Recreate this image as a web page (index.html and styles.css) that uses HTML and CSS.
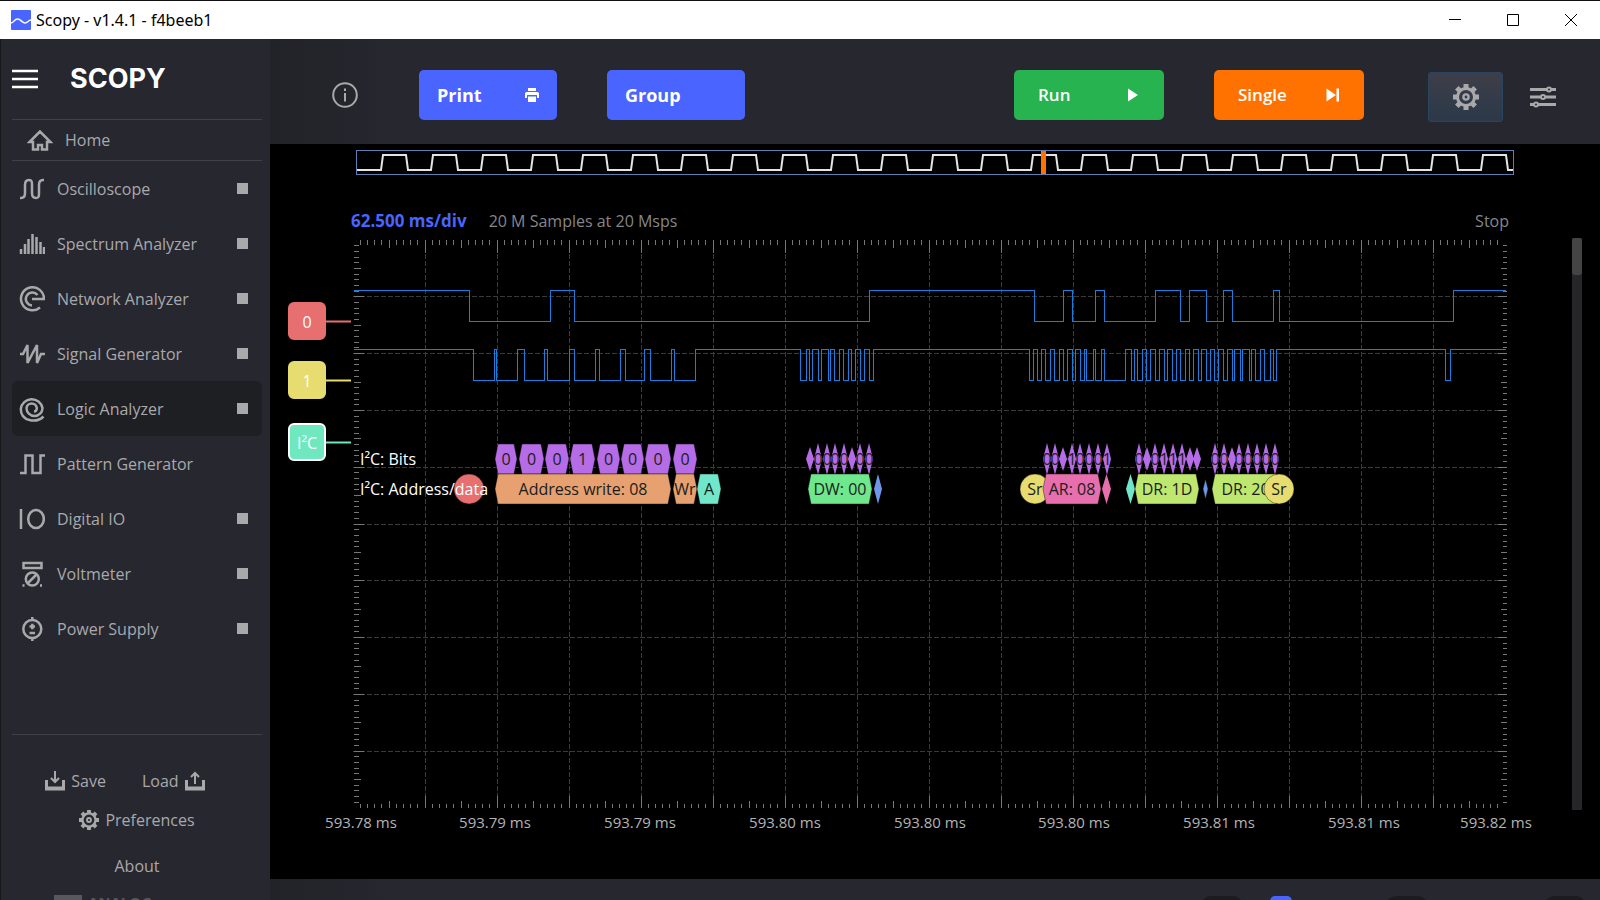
FILE: index.html
```html
<!DOCTYPE html>
<html lang="en">
<head>
<meta charset="UTF-8">
<title>Scopy - v1.4.1 - f4beeb1</title>
<link rel="stylesheet" href="styles.css">
</head>
<body>
<header class="titlebar">
<svg class="app-icon" viewBox="0 0 20 20"><rect width="20" height="20" rx="1" fill="#4a64ff"/><path d="M0 13C3 13 3 9 6.500 9S11 13 14 13s3-3 6-3" fill="none" stroke="#fff" stroke-width="1.500"/></svg>
<span class="title">Scopy - v1.4.1 - f4beeb1</span>
<div class="window-buttons">
<button aria-label="Minimize"><svg viewBox="0 0 14 14"><path d="M1 6.500h12"/></svg></button>
<button aria-label="Maximize"><svg viewBox="0 0 14 14"><path d="M1.500 1.500h11v11h-11z"/></svg></button>
<button aria-label="Close"><svg viewBox="0 0 14 14"><path d="M1 1l12 12M13 1L1 13"/></svg></button>
</div>
</header>

<div class="window">
<aside class="sidebar">
<div class="brand">
<button class="menu-button" aria-label="Menu"><svg viewBox="0 0 26 20"><path d="M0 2h26M0 10h26M0 18h26"/></svg></button>
<span class="logo">SCOPY</span>
</div>
<a class="home" href="#">
<svg viewBox="0 0 26 22"><path d="M13 2.500L2.500 13H6v7.500h5V16h4v4.500h5V13h3.500z"/></svg>
Home</a>

<nav class="tools">
<div class="tool">
<a href="#"><svg viewBox="0 0 26 26"><path d="M1 22h1c3 0 4-2 4-5V9c0-3 1-5 4-5s3 2 3 5v8c0 3 1 5 4 5s3-2 3-5V9c0-3 1-5 4-5h1"/></svg>Oscilloscope</a>
<button aria-label="Run Oscilloscope"></button>
</div>
<div class="tool">
<a href="#"><svg viewBox="0 0 26 26"><path d="M2 18v5M6 13v10M9.500 8v15M13.500 3v20M17.500 6v17M21.500 11v12M25 16v7"/></svg>Spectrum Analyzer</a>
<button aria-label="Run Spectrum Analyzer"></button>
</div>
<div class="tool">
<a href="#"><svg viewBox="0 0 26 26"><path d="M13 13h12A11.500 11.500 0 1 0 21 21.500M18.500 9A6.500 6.500 0 1 0 13 19.500"/></svg>Network Analyzer</a>
<button aria-label="Run Network Analyzer"></button>
</div>
<div class="tool">
<a href="#"><svg viewBox="0 0 26 26"><path d="M1 13h3L8.500 4v18L18 4v18l4-9h4"/></svg>Signal Generator</a>
<button aria-label="Run Signal Generator"></button>
</div>
<div class="tool active">
<a href="#"><svg viewBox="0 0 26 26"><path d="M24.500 20.500C17.500 27.500 1.800 25.500 1.800 13A11 11 0 0 1 23.500 12A8 8 0 0 1 7.500 12A5.200 5.200 0 0 1 17.800 12C17.800 14 17 15.500 15 15.500"/></svg>Logic Analyzer</a>
<button aria-label="Run Logic Analyzer"></button>
</div>
<div class="tool">
<a href="#"><svg viewBox="0 0 26 26"><path d="M1 22h5.500V4.500h7V22h8V4.500H26"/></svg>Pattern Generator</a>
</div>
<div class="tool">
<a href="#"><svg viewBox="0 0 26 26"><path d="M2 3v20"/><ellipse cx="17" cy="13" rx="7.800" ry="9"/></svg>Digital IO</a>
<button aria-label="Run Digital IO"></button>
</div>
<div class="tool">
<a href="#"><svg viewBox="0 0 26 26"><path d="M4.500 2h18v5h-18zM9 22l8.500-8.500M3.500 24.500h2M21 24.500h2"/><circle cx="13.300" cy="18" r="6.500"/></svg>Voltmeter</a>
<button aria-label="Run Voltmeter"></button>
</div>
<div class="tool">
<a href="#"><svg viewBox="0 0 26 26"><circle cx="13.300" cy="13" r="9"/><path d="M13.300 1v4M13.300 21v4M10.500 10.500h5.500M13.300 7.800v5.400M10.500 17h5.500"/></svg>Power Supply</a>
<button aria-label="Run Power Supply"></button>
</div>
</nav>

<div class="sidebar-bottom">
<div class="file-buttons">
<button><svg viewBox="0 0 20 20"><path d="M1.500 9v9h17V9M1.500 17h17"/><path class="arrow" d="M10 0v10M6 7l4 4 4-4"/></svg>Save</button>
<button>Load<svg viewBox="0 0 20 20"><path d="M1.500 9v9h17V9M1.500 17h17"/><path class="arrow" d="M10 13V2M6 6l4-4 4 4"/></svg></button>
</div>
<button><svg viewBox="0 0 26 26"><use href="#gear"/></svg>Preferences</button>
<button class="about">About</button>
<div class="vendor"><span class="vendor-mark"></span>ANALOG</div>
</div>
</aside>

<main class="main">
<div class="toolbar">
<button class="icon-button info" aria-label="Info"><svg viewBox="0 0 26 26"><circle cx="13" cy="13" r="11.800"/><path d="M13 11v8.500M13 6.500v2.500"/></svg></button>
<button class="action blue">Print
<svg viewBox="0 0 14 14"><path d="M3 0h8v3H3zM1.500 4h11A1.500 1.500 0 0 1 14 5.500V10h-2V7H2v3H0V5.500A1.500 1.500 0 0 1 1.500 4zM3 8.500h8V14H3z"/></svg>
</button>
<button class="action blue">Group</button>
<div class="run-buttons">
<button class="action green">Run
<svg viewBox="0 0 14 14"><path d="M2 0.500L12 7 2 13.500z"/></svg>
</button>
<button class="action orange">Single
<svg viewBox="0 0 14 14"><path d="M0.500 0.500L10 7 0.500 13.500zM10.500 0.500H13v13h-2.500z"/></svg>
</button>
</div>
<button class="settings" aria-label="Settings">
<svg viewBox="0 0 26 26">
<g id="gear">
<path d="M13 0v5M13 21v5M0 13h5M21 13h5M3.800 3.800l3.500 3.500M18.700 18.700l3.500 3.500M3.800 22.200l3.500-3.500M18.700 7.300l3.500-3.500" stroke-width="5"/>
<circle cx="13" cy="13" r="8.500" stroke-width="3"/>
<circle cx="13" cy="13" r="2.600" stroke-width="2.400"/>
</g>
</svg>
</button>
<button class="icon-button sliders" aria-label="General settings"><svg viewBox="0 0 26 22"><path d="M0 3.500h17M21 3.500h5M0 11h11M15 11h11M0 18.500h4M8 18.500h18"/><g class="knobs"><circle cx="19" cy="3.500" r="2"/><circle cx="13" cy="11" r="2"/><circle cx="6" cy="18.500" r="2"/></g></svg></button>
</div>

<section class="view">
<svg class="buffer" id="buffer" viewBox="0 0 1158 25"></svg>
<div class="status">
<span class="timebase">62.500 ms/div</span>
<span>20 M Samples at 20 Msps</span>
<span class="state">Stop</span>
</div>
<div class="plot-row">
<svg class="plot" id="plot" viewBox="270 238 1302 600"></svg>
<div class="scrollbar"><div class="thumb"></div></div>
</div>
</section>

<footer class="footer">
<span class="pill"></span>
<span class="pill cursor-pill"></span>
<span class="pill"></span>
<span class="pill"></span>
</footer>
</main>
</div>
<script src="script.js"></script>
</body>
</html>
```

FILE: styles.css
```css
* {
box-sizing: border-box;
}
body {
margin: 0;
height: 100vh;
display: flex;
flex-direction: column;
overflow: hidden;
background-color: #000;
color: #a9a9ab;
font-family: "Open Sans", "Noto Sans", sans-serif;
font-size: 16px;
line-height: 22px;
}
button {
display: flex;
align-items: center;
padding: 0;
border: none;
background: none;
color: inherit;
font: inherit;
cursor: pointer;
}
a {
color: inherit;
text-decoration: none;
}
svg {
display: block;
fill: none;
stroke: #a9a9ab;
}

/* title bar */
.titlebar {
display: flex;
align-items: center;
flex: none;
height: 39px;
padding-left: 11px;
border-top: 1px solid #111;
background-color: #fff;
color: #000;
}
.app-icon {
width: 20px;
height: 20px;
margin-right: 5px;
stroke: none;
}
.title {
font-family: "Noto Sans", sans-serif;
font-size: 16px;
}
.window-buttons {
display: flex;
margin-left: auto;
}
.window-buttons button {
width: 58px;
height: 38px;
justify-content: center;
}
.window-buttons svg {
width: 14px;
height: 14px;
stroke: #000;
}

/* sidebar */
.window {
display: flex;
flex: 1;
min-height: 0;
}
.sidebar {
display: flex;
flex-direction: column;
flex: none;
width: 270px;
padding: 0 8px 0 11px;
overflow: hidden;
border-left: 1px solid #18181b;
background-color: #272730;
}
.brand {
display: flex;
align-items: center;
flex: none;
height: 80px;
}
.menu-button svg {
width: 26px;
height: 20px;
stroke: #fff;
stroke-width: 2.5;
}
.logo {
margin-left: 32px;
color: #fff;
font-family: Inter, sans-serif;
font-size: 27px;
font-weight: 700;
}
.home {
display: flex;
align-items: center;
flex: none;
gap: 12px;
height: 42px;
padding-left: 15px;
border-top: 1px solid #404045;
border-bottom: 1px solid #404045;
}
.home svg {
width: 26px;
height: 22px;
stroke-width: 2.5;
}
.tool {
display: flex;
align-items: center;
justify-content: space-between;
height: 55px;
padding: 0 14px 0 7px;
border-radius: 6px;
}
.tool.active {
background-color: #1e1f23;
}
.tool a {
display: flex;
align-items: center;
gap: 12px;
}
.tool svg {
width: 26px;
height: 26px;
stroke-width: 2.5;
}
.tool button {
width: 11px;
height: 11px;
background-color: #a9a9ab;
}
.sidebar-bottom {
display: flex;
flex-direction: column;
align-items: center;
flex: none;
margin-top: 78px;
padding-top: 35px;
border-top: 1px solid #404045;
}
.sidebar-bottom button {
gap: 6px;
height: 22px;
}
.sidebar-bottom svg {
width: 20px;
height: 20px;
stroke-width: 3;
}
.sidebar-bottom .arrow {
stroke-width: 2;
}
.file-buttons {
display: flex;
gap: 36px;
margin-right: 24px;
margin-bottom: 17px;
}
.sidebar-bottom .about {
margin-top: 24px;
}
.vendor {
display: flex;
gap: 6px;
margin-top: 14px;
margin-right: 68px;
color: #57575d;
font-size: 15px;
font-weight: 700;
}
.vendor-mark {
width: 28px;
height: 22px;
margin-top: 4px;
background-color: #57575d;
}

/* toolbar */
.main {
display: flex;
flex-direction: column;
flex: 1;
min-width: 0;
}
.toolbar {
display: flex;
align-items: center;
flex: none;
height: 105px;
padding: 6px 44px 0 62px;
background: linear-gradient(to right, #222328, #272730 140px);
}
.icon-button svg {
width: 26px;
stroke-width: 2;
}
.info {
margin-right: 61px;
}
.info + .action {
margin-right: 50px;
}
.action {
justify-content: space-between;
width: 138px;
height: 50px;
padding: 0 18px;
border-radius: 5px;
color: #fff;
font-size: 18px;
font-weight: 700;
}
.action svg {
width: 14px;
height: 14px;
fill: #fff;
stroke: none;
}
.blue {
background-color: #4a64ff;
}
.green {
background-color: #27b34f;
}
.orange {
background-color: #ff7200;
}
.run-buttons {
display: flex;
gap: 50px;
margin-left: auto;
}
.run-buttons .action {
width: 150px;
padding: 0 24px;
font-size: 17px;
font-weight: 600;
}
.settings {
justify-content: center;
width: 75px;
height: 50px;
margin: 5px 27px 0 64px;
border: 1px solid #2b4560;
border-radius: 3px;
background: linear-gradient(#3e3e49, #2b394a);
}
.settings svg {
width: 26px;
height: 26px;
}
.sliders {
margin-top: 5px;
}
.sliders svg {
stroke-width: 3;
}
.sliders .knobs {
stroke-width: 2;
}

/* instrument view */
.view {
flex: 1;
min-height: 0;
padding-top: 6px;
background-color: #000;
}
.buffer {
width: calc(100% - 172px);
margin-left: 86px;
}
.status {
display: flex;
gap: 22px;
margin: 35px 91px 6px 81px;
color: #86868a;
}
.timebase {
color: #4a64ff;
font-size: 17px;
font-weight: 700;
}
.state {
margin-left: auto;
}
.plot-row {
display: flex;
align-items: flex-start;
padding-right: 18px;
}
.plot {
flex: 1;
min-width: 0;
}
.scrollbar {
width: 10px;
height: 572px;
background-color: #262628;
}
.thumb {
height: 37px;
border-radius: 3px;
background-color: #444;
}
.plot text {
fill: #fff;
stroke: none;
font-size: 16px;
}
.plot .axis-label {
fill: #b4b4b4;
font-size: 15px;
text-anchor: middle;
}
.plot .note-text {
fill: #1c1c1c;
text-anchor: middle;
}
.plot .badge-text {
text-anchor: middle;
}
.grid {
stroke: #3a3a3a;
stroke-dasharray: 5 2;
shape-rendering: crispEdges;
}
.ticks {
stroke: #777;
shape-rendering: crispEdges;
}
.trace {
stroke: #1a7fdc;
shape-rendering: crispEdges;
}

/* bottom bar */
.footer {
display: flex;
justify-content: flex-end;
flex: none;
height: 21px;
padding: 17px 14px 0 0;
overflow: hidden;
background: linear-gradient(to right, #222328, #272730 140px);
}
.pill {
flex: none;
width: 42px;
height: 20px;
margin-left: 116px;
border-radius: 10px;
background-color: #1c1c20;
}
.cursor-pill {
width: 22px;
margin-left: 27px;
margin-right: -22px;
border-radius: 5px;
background-color: #4a64ff;
}
```

FILE: script.js
```js
var NS = "http://www.w3.org/2000/svg";

function draw(parent, tag, attrs, text) {
    var el = document.createElementNS(NS, tag);
    for (var key in attrs) {
        el.setAttribute(key, attrs[key]);
    }
    if (text !== undefined) el.textContent = text;
    parent.appendChild(el);
    return el;
}

// buffer preview
var buffer = document.getElementById("buffer");
var wave = "M1 20";
for (var x = 25; x < 1150; x += 50) {
    wave += "H" + x + "L" + (x + 2) + " 5H" + (x + 25) + "L" + (x + 27) + " 20";
}
wave += "H1157";
draw(buffer, "path", { d: wave, stroke: "#e4e4e4", "stroke-width": 2 });
draw(buffer, "rect", { x: 0.5, y: 0.5, width: 1157, height: 24, stroke: "#5c80b4" });
draw(buffer, "rect", { x: 685, y: 1, width: 5, height: 23, fill: "#ff7200", stroke: "none" });

// grid: 16 x 10 divisions
var plot = document.getElementById("plot");
var left = 353, right = 1507, top0 = 240, bottom = 808;
var grid = "", ticks = "";
var i, p, len;
for (i = 1; i < 160; i++) {
    p = Math.floor(left + i * 7.2) + 0.5;
    len = i % 10 == 0 ? 12 : i % 5 == 0 ? 7 : 4;
    ticks += "M" + p + " " + top0 + "v" + (len + 1) + "M" + p + " " + bottom + "v-" + len;
    if (i % 10 == 0) grid += "M" + p + " " + top0 + "V" + bottom;
}
for (i = 1; i < 100; i++) {
    p = Math.floor(top0 + i * 5.68) + 0.5;
    len = i % 10 == 0 ? 10 : i % 5 == 0 ? 7 : 5;
    ticks += "M" + (left + 1) + " " + p + "h" + len + "M" + right + " " + p + "h-" + (len - 1);
    if (i % 10 == 0) grid += "M" + left + " " + p + "H" + right;
}
draw(plot, "path", { "class": "grid", d: grid });
draw(plot, "path", { "class": "ticks", d: ticks });

// digital traces, each number is the x of a level change
function trace(edges, high, low) {
    var d = "M354 " + high;
    var level = high;
    edges.forEach(function (x) {
        level = level == high ? low : high;
        d += "H" + (x + 0.5) + "V" + level;
    });
    draw(plot, "path", { "class": "trace", d: d + "H1506" });
}
trace([469, 550, 574, 869, 1034, 1063, 1072, 1095, 1104, 1155, 1180, 1189, 1206, 1223, 1232, 1273, 1279, 1453], 290.5, 321.5);
trace([473, 494, 496, 517, 524, 544, 547, 569, 574, 595, 599, 620, 625, 644, 650, 671, 674, 695,
    800, 806, 809, 812, 818, 821, 828, 830, 834, 839, 843, 848, 851, 855, 860, 864, 869, 873,
    1029, 1033, 1037, 1041, 1045, 1050, 1054, 1059, 1063, 1067, 1072, 1075, 1080, 1084, 1086, 1093, 1095, 1101, 1104,
    1125, 1131, 1134, 1137, 1142, 1146, 1150, 1155, 1159, 1164, 1167, 1172, 1176, 1180, 1185, 1189, 1193, 1198,
    1201, 1206, 1210, 1214, 1218, 1223, 1227, 1232, 1234, 1240, 1242, 1249, 1251, 1255, 1260, 1264, 1270, 1273, 1276,
    1445, 1450], 349.5, 380.5);

// decoder annotations, text is cut at the edge of its shape
var clips = draw(plot, "defs", {});
var count = 0;
function note(x1, x2, y, half, color, text) {
    var bevel = x2 - x1 < 10 ? (x2 - x1) / 2 : 3;
    var points = [[x1, y], [x1 + bevel, y - half], [x2 - bevel, y - half], [x2, y], [x2 - bevel, y + half], [x1 + bevel, y + half]].join(" ");
    var id = "note" + count++;
    draw(draw(clips, "clipPath", { id: id }), "polygon", { points: points });
    draw(plot, "polygon", { points: points, fill: color, stroke: bevel > 3 ? "none" : "#0006" });
    if (text) {
        var g = draw(plot, "g", { "clip-path": "url(#" + id + ")" });
        draw(g, "text", { "class": "note-text", x: (x1 + x2) / 2, y: y + 6 }, text);
    }
}
function circle(x, color, text) {
    draw(plot, "circle", { cx: x, cy: 489, r: 15, fill: color, stroke: "#0006" });
    draw(plot, "text", { "class": "note-text", x: x, y: 495 }, text);
}

var purple = "#b56ce6";
[[495, 517, "0"], [519, 544, "0"], [545, 569, "0"], [570, 595, "1"], [597, 620, "0"], [621, 644, "0"], [645, 671, "0"], [673, 697, "0"]].forEach(function (b) {
    note(b[0], b[1], 459, 15, purple, b[2]);
});

// narrow bits: centre x, value, "" where there is no room for it
[
    [[810, ""], [818, "0"], [827, "0"], [835, "0"], [844, "0"], [852, ""], [860, "0"], [869, "0"]],
    [[1047, "0"], [1055, "0"], [1063, ""], [1072, "1"], [1080, "0"], [1089, "0"], [1098, "0"], [1107, "1"]],
    [[1139, "0"], [1147, ""], [1155, "0"], [1164, "1"], [1173, "1"], [1182, "1"], [1190, ""], [1197, ""]],
    [[1215, "0"], [1224, "0"], [1232, ""], [1239, "0"], [1248, "0"], [1257, "0"], [1266, "0"], [1275, "0"]]
].forEach(function (group) {
    draw(plot, "path", { d: "M" + group[0][0] + " 459H" + group[7][0], stroke: "#6a3f88" });
    group.forEach(function (b) {
        note(b[0] - 4, b[0] + 4, 459, b[1] ? 16 : 12, purple, b[1]);
    });
});

circle(469, "#e76f6f", "");
note(495, 671, 489, 15, "#e7a06f", "Address write: 08");
note(673, 697, 489, 15, "#e7a06f", "Wr");
note(697, 721, 489, 15, "#6fe7c8", "A");
note(808, 872, 489, 15, "#6fe78c", "DW: 00");
note(874, 882, 489, 15, "#6f97e7", "");
circle(1035, "#e7dc6f", "Sr");
note(1043, 1101, 489, 15, "#e76fae", "AR: 08");
note(1102, 1111, 489, 15, "#e76fae", "");
note(1126, 1135, 489, 15, "#6fe7c8", "");
note(1135, 1199, 489, 15, "#bee76f", "DR: 1D");
note(1203, 1208, 489, 10, "#6f97e7", "");
note(1212, 1279, 489, 15, "#bee76f", "DR: 20");
circle(1279, "#e7dc6f", "Sr");

draw(plot, "text", { x: 360, y: 465 }, "I²C: Bits");
draw(plot, "text", { x: 360, y: 495 }, "I²C: Address/data");

// channel handles
[[321, "#e76f6f", "0", "#e76f6f"], [380, "#e7dc6f", "1", "#e7dc6f"], [442, "#6fe7bf", "I²C", "#fff"]].forEach(function (c) {
    draw(plot, "path", { d: "M325 " + (c[0] + 0.5) + "H351", stroke: c[1], "stroke-width": 2 });
    draw(plot, "rect", { x: 289, y: c[0] - 18, width: 36, height: 36, rx: 5, fill: c[1], stroke: c[3], "stroke-width": 2 });
    draw(plot, "text", { "class": "badge-text", x: 307, y: c[0] + 7 }, c[2]);
});

// time axis
[[361, "593.78"], [495, "593.79"], [640, "593.79"], [785, "593.80"], [930, "593.80"], [1074, "593.80"], [1219, "593.81"], [1364, "593.81"], [1496, "593.82"]].forEach(function (t) {
    draw(plot, "text", { "class": "axis-label", x: t[0], y: 828 }, t[1] + " ms");
});
```
